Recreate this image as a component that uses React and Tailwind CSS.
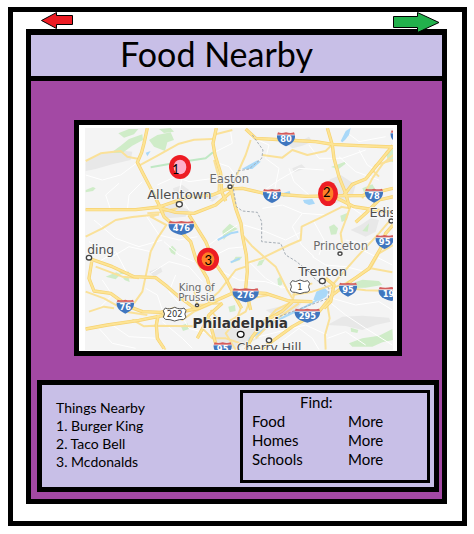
import React from "react";

const places = ["Burger King", "Taco Bell", "Mcdonalds"];
const categories = ["Food", "Homes", "Schools"];

const woods = [
  "M95 84 L125 62 L150 42 L190 28 L192 45 L160 62 L130 84Z",
  "M118 25 L150 12 L178 12 L165 28 L135 38Z",
  "M210 45 L235 30 L275 22 L285 45 L265 52 L258 78 L225 65Z",
  "M240 12 L275 9 L285 20 L255 24Z",
  "M20 195 L42 186 L50 190 L42 198 L20 202Z",
  "M80 455 L112 442 L125 448 L110 463Z",
  "M118 438 L150 440 L150 448 L125 447Z",
  "M132 460 L148 454 L152 471 L138 466Z",
  "M270 370 L280 362 L292 375 L288 390 L276 383Z",
  "M430 318 L452 296 L476 312 L450 325 L434 345Z",
  "M470 395 L490 395 L482 406 L458 414Z",
  "M540 408 L558 402 L548 420 L534 423Z",
  "M750 305 L765 298 L777 310 L772 328 L756 329Z",
  "M784 272 L810 262 L804 284 L788 291Z",
  "M850 190 L880 178 L890 194 L858 210Z",
  "M756 126 L798 110 L800 116 L774 136 L765 128Z",
  "M920 78 L942 72 L942 112 L926 106Z",
  "M810 655 L850 640 L900 632 L940 612 L942 645 L910 652 L880 665 L820 665Z",
  "M815 608 L838 615 L835 624 L816 620Z",
  "M805 480 L850 464 L900 468 L910 480 L860 488 L820 489Z",
  "M595 462 L606 452 L610 478 L598 486Z",
  "M448 545 L468 540 L470 558 L452 562Z",
  "M305 602 L325 595 L330 612 L312 618Z",
  "M850 318 L870 295 L866 320Z",
];

const hills = [
  "M20 112 L60 88 L120 76 L160 80 L155 105 L100 118 L50 132 L20 138Z",
  "M282 190 L310 180 L330 195 L322 208 L285 207Z",
  "M730 185 L755 162 L785 150 L830 180 L820 215 L770 235 L735 225Z",
  "M610 45 L640 30 L660 50 L690 35 L700 50 L670 62 L640 70Z",
  "M640 130 L668 118 L680 130 L645 142Z",
  "M745 600 L790 575 L850 572 L930 578 L935 590 L890 600 L850 615 L800 603Z",
  "M815 315 L845 300 L875 280 L900 285 L890 320 L860 335Z",
  "M210 440 L245 425 L250 440 L225 455Z",
  "M400 620 L450 590 L540 600 L540 640 L470 672 L410 672Z",
  "M240 255 L285 235 L330 255 L320 275 L265 280Z",
  "M560 555 L620 540 L670 530 L650 560 L590 575Z",
  "M370 212 L395 205 L420 215 L400 230Z",
];

const water = [
  "M785 48 L800 18 L815 9 L810 30 L798 45 L790 52Z",
  "M672 225 L700 222 L708 236 L690 240 L676 234Z",
  "M610 205 L632 198 L636 212 L612 215Z",
  "M703 524 L712 500 L735 487 L748 500 L742 515 L720 528Z",
  "M488 132 L535 106 L545 110 L520 132Z",
  "M200 83 L215 78 L205 94Z",
];

const minorRoads = [
  "M20 150 L70 165 L125 150 L176 112",
  "M120 175 L80 210 L95 255",
  "M190 170 L150 210 L145 255",
  "M235 180 L290 155 L330 170 L405 160",
  "M330 255 L300 210 L308 160 L270 120",
  "M405 110 L450 125 L475 160",
  "M410 80 L460 55 L455 20",
  "M515 35 L570 60 L560 100 L600 130 L588 190",
  "M550 200 L600 165 L660 130 L735 135",
  "M630 130 L645 170 L690 210",
  "M200 270 L240 330 L300 345 L355 335",
  "M45 285 L110 340 L180 365 L250 345",
  "M30 350 L100 395 L150 365 L215 380",
  "M60 410 L110 380 L150 455",
  "M215 445 L270 410 L330 425 L370 470",
  "M255 350 L300 390 L345 410",
  "M390 360 L430 330 L475 300",
  "M400 395 L450 370 L500 365",
  "M495 300 L560 320 L620 345 L668 320",
  "M500 400 L560 460 L610 490",
  "M430 440 L480 465 L560 470 L640 495",
  "M550 250 L610 240 L670 265 L740 270",
  "M670 265 L640 305 L668 360 L705 395",
  "M705 290 L735 345 L720 390",
  "M700 395 L740 420 L800 425 L860 440",
  "M800 345 L850 355 L890 340",
  "M800 235 L850 270 L880 250",
  "M840 370 L900 400 L940 420",
  "M70 465 L100 510 L60 550",
  "M200 490 L235 510 L250 555",
  "M290 450 L270 500 L300 535",
  "M100 600 L150 635 L235 640",
  "M60 610 L100 655 L170 670",
  "M250 590 L310 640 L340 670",
  "M300 560 L330 610 L400 630",
  "M520 640 L600 620 L680 600 L745 630",
  "M600 655 L660 610 L700 640 L720 674",
  "M750 530 L800 570 L860 610 L940 660",
  "M760 520 L830 540 L900 530 L940 555",
  "M745 640 L800 620 L860 660",
  "M690 60 L720 100 L790 100 L860 75",
  "M840 75 L865 120 L890 135",
  "M780 95 L830 140 L900 165",
  "M800 20 L840 50 L920 35",
];

const roads = [
  "M20 108 L65 85 L125 78 L145 95 L180 102",
  "M180 122 L230 95 L300 56 L345 44 L402 42",
  "M20 335 L70 310 L110 285 L160 276 L240 268",
  "M240 268 L215 275 L262 300 L235 340 L215 380 L205 430 L190 500 L165 535",
  "M402 42 L410 28 L460 15",
  "M405 105 L420 160 L418 205",
  "M205 265 L245 262 L295 250",
  "M490 330 L518 362 L560 400 L590 425 L625 495 L640 520",
  "M500 415 L548 400 L630 360 L665 345 L668 305 L720 280 L790 245",
  "M550 90 L610 98 L640 75 L685 90 L740 78 L760 58",
  "M515 45 L500 90 L480 135 L460 185",
  "M785 245 L812 250 L800 285 L785 325 L792 375",
  "M745 540 L752 580 L738 630 L740 674",
  "M755 490 L800 475 L875 430 L940 442",
  "M830 460 L875 430 L900 385 L942 360",
  "M800 488 L860 496 L940 498",
  "M640 510 L700 500 L760 480 L830 400 L900 325 L930 290",
  "M500 425 L470 435 L420 500 L385 530",
  "M270 555 L310 585 L345 560 L415 530",
  "M50 425 L130 455 L180 460",
  "M30 560 L75 545 L105 550",
  "M20 500 L75 520 L150 562 L205 570",
  "M160 584 L195 604 L225 602 L345 604 L380 580",
  "M235 570 L230 600 L240 650 L260 674",
  "M550 600 L590 555 L640 530 L650 490 L700 475",
  "M530 640 L580 590 L610 570 L660 535",
  "M395 555 L430 600 L500 560 L515 520 L570 510",
  "M345 495 L355 540 L430 535",
  "M485 550 L470 590 L440 625 L470 674",
  "M385 580 L370 610 L400 640 L440 640 L500 660",
  "M850 220 L880 160 L910 118 L942 90",
  "M900 155 L880 135 L890 120 L942 105",
];

const highways = [
  "M205 9 L195 55 L188 82 L175 112 L190 142 L210 180 L240 240 L255 275 L300 315 L335 350 L350 400 L385 460 L395 500",
  "M20 254 L170 254 L240 246 L330 215 L400 210 L445 192 L490 190 L550 204 L680 214 L795 212 L850 212 L942 190",
  "M240 248 L290 262 L345 265 L410 240 L455 202",
  "M412 9 L402 55 L408 90 L425 145 L428 200 L440 228",
  "M455 190 L470 250 L486 295 L490 330 L502 390 L505 440 L500 490 L515 555",
  "M330 270 L355 310 L380 350 L405 410 L440 460 L465 510 L488 550",
  "M30 400 L100 425 L165 455 L230 458 L265 485 L300 515 L350 552",
  "M38 410 L30 460 L45 498 L95 505 L150 545 L190 560 L245 562 L290 550",
  "M20 612 L85 600 L180 586 L270 568 L360 550 L415 525 L470 500 L560 505 L630 528 L700 530",
  "M500 12 L530 40 L620 45 L710 50 L760 58 L840 62 L942 66",
  "M745 9 L760 60 L765 100 L780 155 L800 205 L812 250",
  "M740 205 L785 225 L825 245 L890 255 L942 262",
  "M795 210 L820 178 L860 162 L890 125 L925 82 L942 62",
  "M942 215 L900 225 L860 265 L830 292",
  "M942 300 L920 325 L905 370 L870 430 L800 480 L760 510 L720 560 L640 605 L585 645 L545 674",
  "M740 460 L765 480 L755 530 L735 550",
  "M500 674 L520 635 L555 590 L610 558 L640 530",
  "M355 640 L375 602 L390 570 L430 535",
  "M390 580 L400 620 L415 674",
  "M238 570 L232 600 L235 640 L255 670",
];

const creeks = [
  "M416 345 L455 325 L478 320",
  "M455 412 L482 400",
  "M505 674 L512 640 L545 620 L590 588 L680 545 L715 525",
];

const borders = [
  "M520 30 L552 75 L548 100 L510 132 L475 138 L462 185 L472 245 L490 258 L535 262 L548 290 L548 350 L605 355 L620 390 L650 408 L690 440 L708 462 L750 490 L748 520 L680 545 L600 575",
];

const shields = [
  { n: "80", x: 621, y: 42, w: 54 },
  { n: "78", x: 579, y: 212, w: 54 },
  { n: "78", x: 885, y: 211, w: 54 },
  { n: "476", x: 307, y: 308, w: 76 },
  { n: "95", x: 917, y: 350, w: 54 },
  { n: "95", x: 807, y: 493, w: 54 },
  { n: "276", x: 500, y: 510, w: 78 },
  { n: "295", x: 685, y: 571, w: 76 },
  { n: "76", x: 139, y: 544, w: 52 },
  { n: "195", x: 937, y: 506, w: 76 },
  { n: "95", x: 431, y: 672, w: 54 },
  { n: "", x: 962, y: 36, w: 54 },
];

const towns = [
  { name: "Easton", x: 451, y: 174, size: 35, color: "#6b6b6b", dot: [453, 185, 6] },
  { name: "Allentown", x: 301, y: 222, size: 39, color: "#4d4d4d", dot: [301, 238, 9] },
  { name: "Edison", x: 936, y: 276, size: 39, color: "#4d4d4d", dot: [937, 288, 7] },
  { name: "Princeton", x: 785, y: 376, size: 35, color: "#6b6b6b", dot: [783, 386, 6] },
  { name: "ding", x: 65, y: 387, size: 37, color: "#4d4d4d", dot: [30, 398, 8] },
  { name: "Trenton", x: 731, y: 452, size: 39, color: "#4d4d4d", dot: [730, 468, 9] },
  { name: "King of", x: 353, y: 499, size: 31, color: "#6b6b6b" },
  { name: "Prussia", x: 353, y: 528, size: 31, color: "#6b6b6b", dot: [354, 541, 5] },
  { name: "Cherry Hill", x: 570, y: 680, size: 37, color: "#4d4d4d", dot: [570, 646, 8] },
];

const pins = [
  { n: 1, x: 303, y: 126, rx: 33, ry: 36, fill: "#ffaec9", tx: 290, ty: 147 },
  { n: 2, x: 747, y: 206, rx: 30, ry: 37, fill: "#ff7f27", tx: 743, ty: 217 },
  { n: 3, x: 387, y: 403, rx: 33, ry: 35, fill: "#ff7f27", tx: 388, ty: 419 },
];

function Shield({ n, x, y, w }) {
  const h = w / 2;
  return (
    <g transform={`translate(${x} ${y})`}>
      <path
        d={`M${-h} -12 H${h} C${h + 2} 6 ${h - 12} 16 0 22 C${12 - h} 16 ${-h - 2} 6 ${-h} -12Z`}
        fill="#3f76bf"
      />
      <path d={`M${3 - h} -20 Q${-h / 2} -16 0 -20 Q${h / 2} -16 ${h - 3} -20 L${h} -12 H${-h}Z`} fill="#d45c5c" />
      <path d={`M${-h} -12 H${h}`} stroke="#fff" strokeWidth="2" />
      <text y="10" textAnchor="middle" fontSize="25" fontWeight="700" fill="#fff">
        {n}
      </text>
    </g>
  );
}

function RouteSign({ n, x, y, w }) {
  const h = w / 2;
  return (
    <g transform={`translate(${x} ${y})`}>
      <path
        d={`M${6 - h} -18 Q${-h / 2} -12 0 -20 Q${h / 2} -12 ${h - 6} -18 L${h} -10 Q${h - 7} 0 ${h} 10 Q${h - 4} 19 14 17 L0 21 L-14 17 Q${4 - h} 19 ${-h} 10 Q${7 - h} 0 ${-h} -10Z`}
        fill="#fff"
        stroke="#555"
        strokeWidth="3"
      />
      <text y="9" textAnchor="middle" fontSize="25" fill="#333">
        {n}
      </text>
    </g>
  );
}

function Lines({ paths, color, width, dash }) {
  return (
    <g fill="none" stroke={color} strokeWidth={width} strokeLinejoin="round" strokeDasharray={dash}>
      {paths.map((d) => (
        <path key={d} d={d} />
      ))}
    </g>
  );
}

function Shapes({ paths, color }) {
  return (
    <g fill={color}>
      {paths.map((d) => (
        <path key={d} d={d} />
      ))}
    </g>
  );
}

function AreaMap() {
  return (
    <svg
      viewBox="18 9 924 666"
      role="img"
      aria-label="Map of nearby food around Philadelphia"
      className="block w-full font-['DejaVu_Sans',sans-serif]"
    >
      <rect x="18" y="9" width="924" height="666" fill="#f4f4f4" />
      <Shapes paths={hills} color="#e8e8e8" />
      <Shapes paths={woods} color="#cfecc8" />
      <Lines paths={minorRoads} color="#ffffff" width={3} />
      <Shapes paths={water} color="#a9d8f8" />
      <Lines paths={creeks} color="#a9d8f8" width={6} />
      <Lines paths={["M215 127 L300 112 L380 100 L402 82"]} color="#bfe8c4" width={6} />
      <Lines paths={roads} color="#fae199" width={6} />
      <Lines paths={highways} color="#f6d272" width={10} />
      <Lines paths={highways} color="#fde495" width={6} />
      <Lines paths={borders} color="#a5adb5" width={3} dash="8 5" />

      {shields.map((s) => (
        <Shield key={`${s.n}-${s.x}`} {...s} />
      ))}
      <RouteSign n="1" x={663} y={485} w={58} />
      <RouteSign n="202" x={287} y={567} w={68} />

      <g textAnchor="middle" stroke="#f8f8f8" strokeWidth="4" paintOrder="stroke">
        {towns.map((t) => (
          <text key={t.name} x={t.x} y={t.y} fontSize={t.size} fill={t.color}>
            {t.name}
          </text>
        ))}
        <text x="484" y="610" fontSize="41" fontWeight="700" fill="#333">
          Philadelphia
        </text>
      </g>
      <g fill="#fff" stroke="#444" strokeWidth="4">
        {towns
          .filter((t) => t.dot)
          .map((t) => (
            <ellipse key={t.name} cx={t.dot[0]} cy={t.dot[1]} rx={t.dot[2]} ry={t.dot[2] - 1} />
          ))}
        <ellipse cx="485" cy="628" rx="10" ry="9" stroke="#111" />
      </g>

      {pins.map((p) => (
        <g key={p.n}>
          <ellipse cx={p.x} cy={p.y} rx={p.rx} ry={p.ry} fill="#ed1c24" />
          <ellipse cx={p.x} cy={p.y} rx={p.rx - 14} ry={p.ry - 14} fill={p.fill} />
          <text x={p.tx} y={p.ty} textAnchor="middle" fontSize="39" className="font-['Lato',sans-serif]">
            {p.n}
          </text>
        </g>
      ))}
    </svg>
  );
}

export default function App() {
  return (
    <div className="flow-root bg-white font-['Lato',sans-serif] text-black">
      <main className="mt-[7px] mr-[7px] mb-2 ml-2 border-5 border-black bg-white pr-[15px] pb-[17px] pl-[13px]">
        <nav className="flex h-[17px] items-start justify-between pr-[7px] pl-[15px]">
          <button type="button" aria-label="Back" className="block">
            <svg width="32" height="17" viewBox="0 0 32 17" className="block">
              <path d="M0.5 8.5 L15.5 0.5 V3.5 H31.5 V12.5 H15.5 V16.5Z" fill="#ed1c24" stroke="#000" />
            </svg>
          </button>
          <button type="button" aria-label="Forward" className="relative z-10 block">
            <svg width="47" height="21" viewBox="0 0 47 21" className="block">
              <path d="M46 10.5 L24.5 0.5 V4.5 H0.5 V15.5 H24.5 V20.5Z" fill="#22b14c" stroke="#000" />
            </svg>
          </button>
        </nav>

        <div className="border-5 border-t-6 border-black bg-[#a349a4]">
          <header className="border-b-5 border-black bg-[#c8bfe7] pr-10 pb-1">
            <h1 className="text-center text-[34px] leading-[37px]">Food Nearby</h1>
          </header>

          <div className="pt-[39px] pr-[3px] pb-[7px] pl-[6px]">
            <section className="mr-[37px] ml-[37px] border-5 border-black bg-white pt-[3px] pr-1 pb-px pl-[6px]">
              <AreaMap />
            </section>

            <div className="mt-6 flex items-start justify-between border-5 border-black bg-[#c8bfe7] pt-[5px] pr-1 pb-1 pl-[14px]">
              <section className="pt-[9px] text-sm leading-[18px]">
                <h2>Things Nearby</h2>
                <ol>
                  {places.map((place, i) => (
                    <li key={place}>
                      {i + 1}. {place}
                    </li>
                  ))}
                </ol>
              </section>

              <section className="w-[190px] border-3 border-black pb-[11px] pl-[9px] text-[15px] leading-[19px]">
                <h2 className="pl-12">Find:</h2>
                <ul>
                  {categories.map((category) => (
                    <li key={category} className="grid grid-cols-[96px_1fr]">
                      <a href={`#${category.toLowerCase()}`}>{category}</a>
                      <a href={`#more-${category.toLowerCase()}`}>More</a>
                    </li>
                  ))}
                </ul>
              </section>
            </div>
          </div>
        </div>
      </main>
    </div>
  );
}
